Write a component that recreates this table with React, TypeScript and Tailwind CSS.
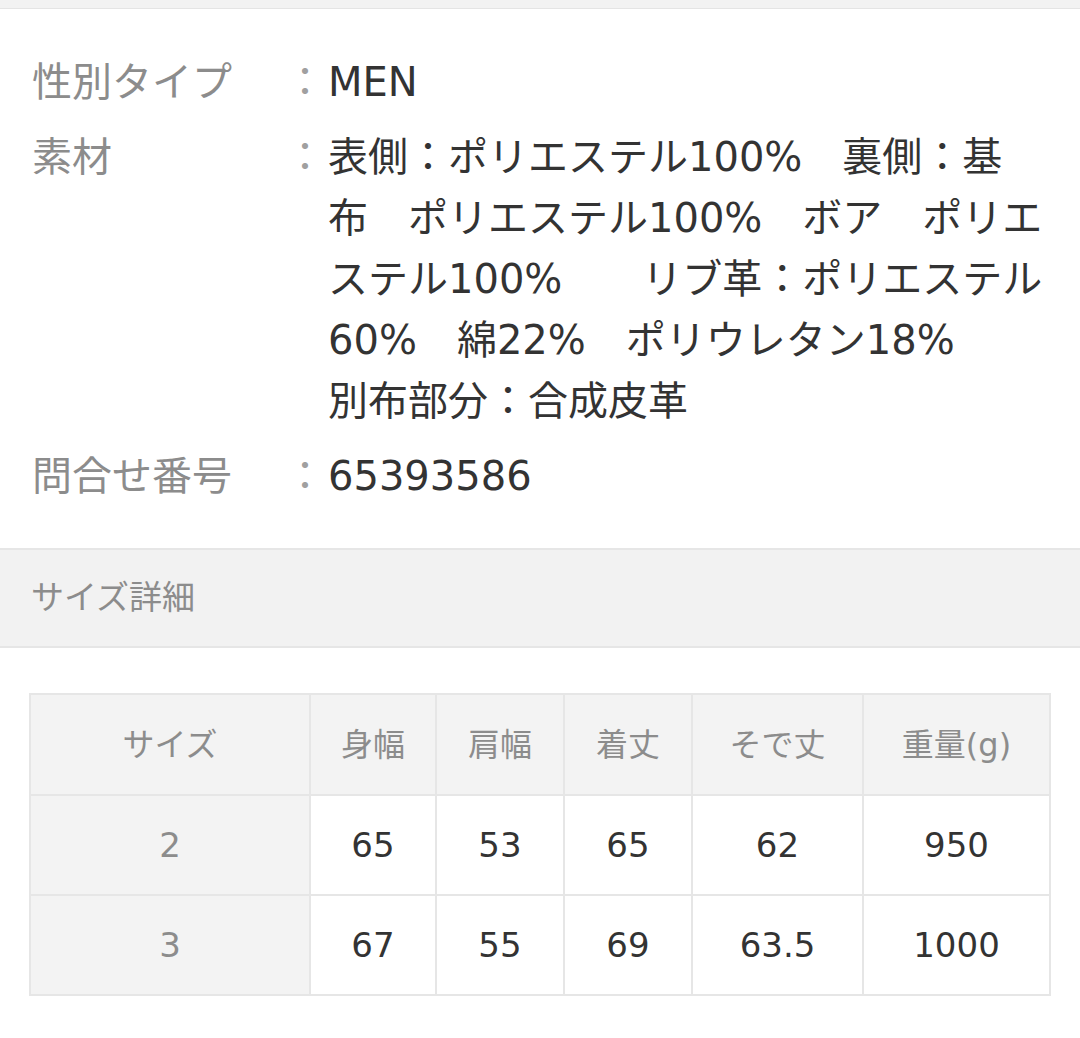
import React from 'react';

const FONT = { fontFamily: '"DejaVu Sans", "Noto Sans CJK JP", sans-serif' };

const MATERIAL_LINES = [
    '表側：ポリエステル100%　裏側：基',
    '布　ポリエステル100%　ボア　ポリエ',
    'ステル100%　　リブ革：ポリエステル',
    '60%　綿22%　ポリウレタン18%',
    '別布部分：合成皮革',
];

const HEADERS = ['サイズ', '身幅', '肩幅', '着丈', 'そで丈', '重量(g)'];
const COL_WIDTHS = ['w-[280px]', 'w-[126px]', 'w-[128px]', 'w-[128px]', 'w-[171px]', 'w-[187px]'];
const ROWS = [
    ['2', '65', '53', '65', '62', '950'],
    ['3', '67', '55', '69', '63.5', '1000'],
];

const InfoRow = ({ label, lines }: { label: string; lines: string[] }) => (
    <div className="flex text-[40px] leading-[61px]">
        <div className="w-[253px] shrink-0 text-[#8c8c8c] whitespace-nowrap">{label}</div>
        <div className="w-[43px] shrink-0 text-[#a0a0a0]">：</div>
        <div className="flex-1 text-[#333333]">
            {lines.map((line, i) => (
                <div key={i} className="whitespace-pre">{line}</div>
            ))}
        </div>
    </div>
);

export default function App() {
    return (
        <div className="w-[1080px] h-[1038px] bg-white overflow-hidden" style={FONT}>
            {/* top strip */}
            <div className="h-[9px] bg-[#f2f2f2] border-b border-[#e4e4e4]"></div>

            {/* product info */}
            <div className="pl-[32px] pt-[43px] flex flex-col gap-[14px]">
                <InfoRow label="性別タイプ" lines={['MEN']} />
                <InfoRow label="素材" lines={MATERIAL_LINES} />
                <InfoRow label="問合せ番号" lines={['65393586']} />
            </div>

            {/* section header */}
            <div className="mt-[41px] h-[100px] bg-[#f2f2f2] border-t-2 border-b-2 border-[#e6e6e6] flex items-center pl-[31px]">
                <span className="text-[33px] text-[#8c8c8c]">サイズ詳細</span>
            </div>

            {/* size table */}
            <div className="pl-[29px] pt-[45px]">
                <table className="border-collapse border-2 border-[#e6e6e6] text-center">
                    <thead>
                        <tr className="h-[101px] bg-[#f3f3f3]">
                            {HEADERS.map((h, i) => (
                                <th key={h} className={`${COL_WIDTHS[i]} border-2 border-[#e6e6e6] font-normal text-[32px] text-[#8c8c8c]`}>
                                    {h}
                                </th>
                            ))}
                        </tr>
                    </thead>
                    <tbody>
                        {ROWS.map((row) => (
                            <tr key={row[0]} className="h-[100px]">
                                {row.map((cell, i) => (
                                    <td
                                        key={i}
                                        className={
                                            i === 0
                                                ? 'border-2 border-[#e6e6e6] bg-[#f3f3f3] text-[34px] text-[#8c8c8c]'
                                                : 'border-2 border-[#e6e6e6] text-[34px] text-[#333333]'
                                        }
                                    >
                                        {cell}
                                    </td>
                                ))}
                            </tr>
                        ))}
                    </tbody>
                </table>
            </div>
        </div>
    );
}
